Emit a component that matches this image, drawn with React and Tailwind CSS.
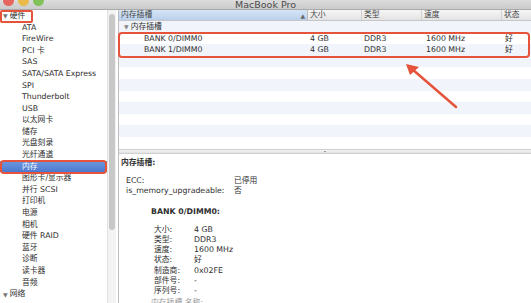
import React from 'react'

const font = "font-['DejaVu_Sans','Noto_Sans_CJK_SC',sans-serif]"

const sidebarItems = [
  'ATA', 'FireWire', 'PCI 卡', 'SAS', 'SATA/SATA Express', 'SPI', 'Thunderbolt', 'USB',
  '以太网卡', '储存', '光盘刻录', '光纤通道', '内存', '图形卡/显示器', '并行 SCSI', '打印机',
  '电源', '相机', '硬件 RAID', '蓝牙', '诊断', '读卡器', '音频',
]

const banks = [
  { name: 'BANK 0/DIMM0', size: '4 GB', type: 'DDR3', speed: '1600 MHz', status: '好' },
  { name: 'BANK 1/DIMM0', size: '4 GB', type: 'DDR3', speed: '1600 MHz', status: '好' },
]

const details = [
  ['大小:', '4 GB'],
  ['类型:', 'DDR3'],
  ['速度:', '1600 MHz'],
  ['状态:', '好'],
  ['制造商:', '0x02FE'],
  ['部件号:', '-'],
  ['序列号:', '-'],
]

function Row({ children, striped }) {
  return (
    <div className={`flex h-[11.6px] items-center ${striped ? 'bg-[#f1f5fb]' : 'bg-white'}`}>
      {children}
    </div>
  )
}

export default function App() {
  return (
    <div className={`relative w-[531px] h-[303px] overflow-hidden bg-white text-[#2e2e2e] ${font}`}>
      {/* title bar */}
      <div className="relative flex h-[10px] items-end justify-center border-b border-[#a9a9a9] bg-gradient-to-b from-[#dcdcdc] to-[#cbcbcb]">
        <div className="absolute left-[3px] top-[-5px] flex gap-[4px]">
          <span className="h-[11px] w-[11px] rounded-full bg-[#e5665e]" />
          <span className="h-[11px] w-[11px] rounded-full bg-[#e9bb4a]" />
          <span className="h-[11px] w-[11px] rounded-full bg-[#82c25a]" />
        </div>
        <span className="mb-[-1px] text-[9.5px] leading-[10px] text-[#4b4b4b]">MacBook Pro</span>
      </div>

      <div className="flex h-[293px]">
        {/* sidebar */}
        <div className="w-[107px] shrink-0 text-[7.8px] bg-white">
          <div className="flex h-[11.6px] items-center pl-[3px] gap-[2px]">
            <span className="text-[6px] text-[#777]">▼</span>
            <span>硬件</span>
          </div>
          {sidebarItems.map(item => (
            <div
              key={item}
              className={`flex h-[11.6px] items-center pl-[22px] ${item === '内存' ? 'bg-gradient-to-b from-[#6d98df] to-[#4c79cf] text-white' : ''}`}
            >
              {item}
            </div>
          ))}
          <div className="flex h-[11.6px] items-center pl-[3px] gap-[2px]">
            <span className="text-[6px] text-[#777]">▼</span>
            <span>网络</span>
          </div>
        </div>

        {/* sidebar scrollbar */}
        <div className="w-[9px] shrink-0 bg-[#f3f3f3] border-l border-[#e2e2e2] pt-[4px] px-[1px]">
          <div className="h-[216px] rounded-full bg-[#c8c8c8]" />
        </div>
        <div className="w-[2px] shrink-0 bg-white" />

        {/* main */}
        <div className="flex flex-1 flex-col border-l border-[#bdbdbd] text-[7.8px]">
          <div className="h-[139px] shrink-0 overflow-hidden">
            <div className="flex h-[11px] items-center border-b border-[#c6c6c6] bg-gradient-to-b from-[#f6f6f6] to-[#e3e3e3] text-[#444]">
              <div className="flex h-full w-[189px] items-center justify-between bg-gradient-to-b from-[#d6e5f6] to-[#b9d0ec] pl-[2px] pr-[2px] border-r border-[#bcbcbc]">
                <span>内存插槽</span>
                <span className="text-[6px] text-[#666]">▲</span>
              </div>
              <div className="flex h-full w-[54px] items-center pl-[2px] border-r border-[#d0d0d0]">大小</div>
              <div className="flex h-full w-[60px] items-center pl-[2px] border-r border-[#d0d0d0]">类型</div>
              <div className="flex h-full w-[80px] items-center pl-[2px] border-r border-[#d0d0d0]">速度</div>
              <div className="flex h-full flex-1 items-center pl-[2px]">状态</div>
            </div>
            <Row striped>
              <div className="flex items-center gap-[2px] pl-[5px]">
                <span className="text-[6px] text-[#888]">▼</span>
                <span>内存插槽</span>
              </div>
            </Row>
            {banks.map((b, i) => (
              <Row key={b.name} striped={i % 2 === 1}>
                <div className="w-[189px] pl-[25px]">{b.name}</div>
                <div className="w-[54px] pl-[2px]">{b.size}</div>
                <div className="w-[60px] pl-[2px]">{b.type}</div>
                <div className="w-[80px] pl-[4px]">{b.speed}</div>
                <div className="flex-1 pl-[3px]">{b.status}</div>
              </Row>
            ))}
            {Array.from({ length: 9 }).map((_, i) => (
              <Row key={i} striped={i % 2 === 0} />
            ))}
          </div>

          {/* splitter */}
          <div className="flex h-[5px] shrink-0 items-center justify-center border-y border-[#cfcfcf] bg-gradient-to-b from-[#f4f4f4] to-[#e2e2e2]">
            <span className="h-[1px] w-[2px] bg-[#999]" />
          </div>

          {/* detail pane */}
          <div className="min-h-0 flex-1 overflow-hidden pl-[2px] pt-[4px] text-[7.8px] leading-[10.2px]">
            <div className="font-bold text-[#333]">内存插槽:</div>
            <div className="mt-[8px] grid grid-cols-[108px_1fr] pl-[5px]">
              <span>ECC:</span>
              <span>已停用</span>
              <span>is_memory_upgradeable:</span>
              <span>否</span>
            </div>
            <div className="mt-[10px] pl-[30px] font-bold">BANK 0/DIMM0:</div>
            <div className="mt-[8px] grid grid-cols-[40px_1fr] pl-[33px]">
              {details.map(([k, v]) => (
                <React.Fragment key={k}>
                  <span>{k}</span>
                  <span>{v}</span>
                </React.Fragment>
              ))}
            </div>
            <div className="mt-[2px] pl-[30px] text-[#999]">内存插槽 名称:</div>
          </div>
        </div>
      </div>

      {/* annotations */}
      <div className="absolute left-0 top-[10px] h-[13px] w-[33px] rounded-[2px] border-2 border-[#e5533b]" />
      <div className="absolute left-0 top-[160px] h-[14px] w-[107px] rounded-[4px] border-2 border-[#e5533b]" />
      <div className="absolute left-[118px] top-[32px] h-[26px] w-[412px] rounded-[4px] border-2 border-[#e5533b]" />
      <svg className="absolute left-0 top-0" width="531" height="303" viewBox="0 0 531 303">
        <line x1="456" y1="107" x2="412" y2="69" stroke="#e5533b" strokeWidth="2.5" strokeLinecap="round" />
        <polygon points="406,64 419,67 410,75" fill="#e5533b" />
      </svg>
    </div>
  )
}
